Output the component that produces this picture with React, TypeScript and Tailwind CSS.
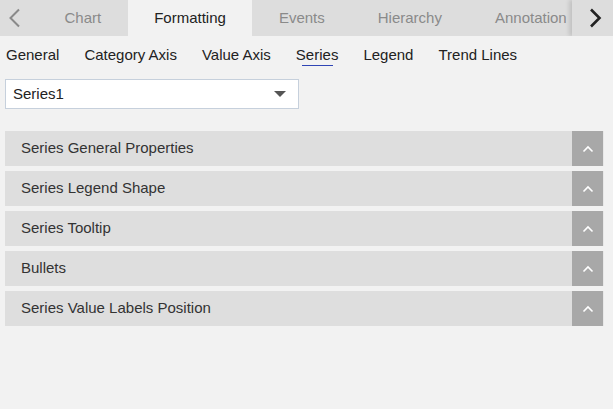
import React from "react";

const tabs = ["Chart", "Formatting", "Events", "Hierarchy", "Annotation"];
const subtabs = ["General", "Category Axis", "Value Axis", "Series", "Legend", "Trend Lines"];
const sections = [
  "Series General Properties",
  "Series Legend Shape",
  "Series Tooltip",
  "Bullets",
  "Series Value Labels Position",
];

export default function App() {
  return (
    <div
      className="w-[613px] h-[409px] bg-[#f2f2f2] overflow-hidden"
      style={{ fontFamily: '"Liberation Sans", Arial, sans-serif' }}
    >
      <div className="relative h-[36px] bg-[#dddddd] flex overflow-hidden">
        <div className="w-[38px] shrink-0 flex items-center pl-[8px]">
          <svg width="13" height="20" viewBox="0 0 13 20">
            <path d="M11 1.5 L2.5 10 L11 18.5" fill="none" stroke="#8a8a8a" strokeWidth="2" />
          </svg>
        </div>
        {tabs.map((t) => (
          <div
            key={t}
            className={
              "px-[26.5px] shrink-0 flex items-center text-[15px] whitespace-nowrap " +
              (t === "Formatting" ? "bg-[#f2f2f2] text-[#222222]" : "text-[#8a8a8a]")
            }
          >
            {t}
          </div>
        ))}
        <div className="absolute right-0 top-0 h-[36px] w-[41px] bg-[#dddddd] flex items-center pl-[17px] shadow-[-3px_0_4px_rgba(0,0,0,0.12)]">
          <svg width="13" height="20" viewBox="0 0 13 20">
            <path d="M2 1.5 L10.5 10 L2 18.5" fill="none" stroke="#222222" strokeWidth="2.6" />
          </svg>
        </div>
      </div>

      <div className="flex gap-[25px] pl-[6px] h-[38px] items-center text-[15px] text-[#222222]">
        {subtabs.map((s) => (
          <div key={s} className="relative whitespace-nowrap">
            {s}
            {s === "Series" && (
              <div className="absolute left-[6px] right-[5px] bottom-[0px] h-[1px] bg-[#2f45b5]" />
            )}
          </div>
        ))}
      </div>

      <div className="ml-[5px] mt-[5px] w-[294px] h-[30px] bg-white border border-[#c6d0dc] flex items-center justify-between pl-[7px] pr-[12px] text-[15px] text-[#222222]">
        <span>Series1</span>
        <svg width="12" height="6" viewBox="0 0 12 6">
          <path d="M0 0 L12 0 L6 6 Z" fill="#555555" />
        </svg>
      </div>

      <div className="mt-[22px] flex flex-col gap-[5px] ml-[5px] w-[599px]">
        {sections.map((s) => (
          <div key={s} className="h-[35px] bg-[#dedede] flex items-center justify-between border-r border-[#e8e8e8]">
            <span className="pl-[16px] text-[15px] text-[#333333]">{s}</span>
            <div className="w-[31px] h-[35px] bg-[#a8a8a8] flex items-center justify-center">
              <svg width="12" height="8" viewBox="0 0 12 8">
                <path d="M1.5 6.5 L6 2 L10.5 6.5" fill="none" stroke="#ffffff" strokeWidth="1.6" />
              </svg>
            </div>
          </div>
        ))}
      </div>
    </div>
  );
}
